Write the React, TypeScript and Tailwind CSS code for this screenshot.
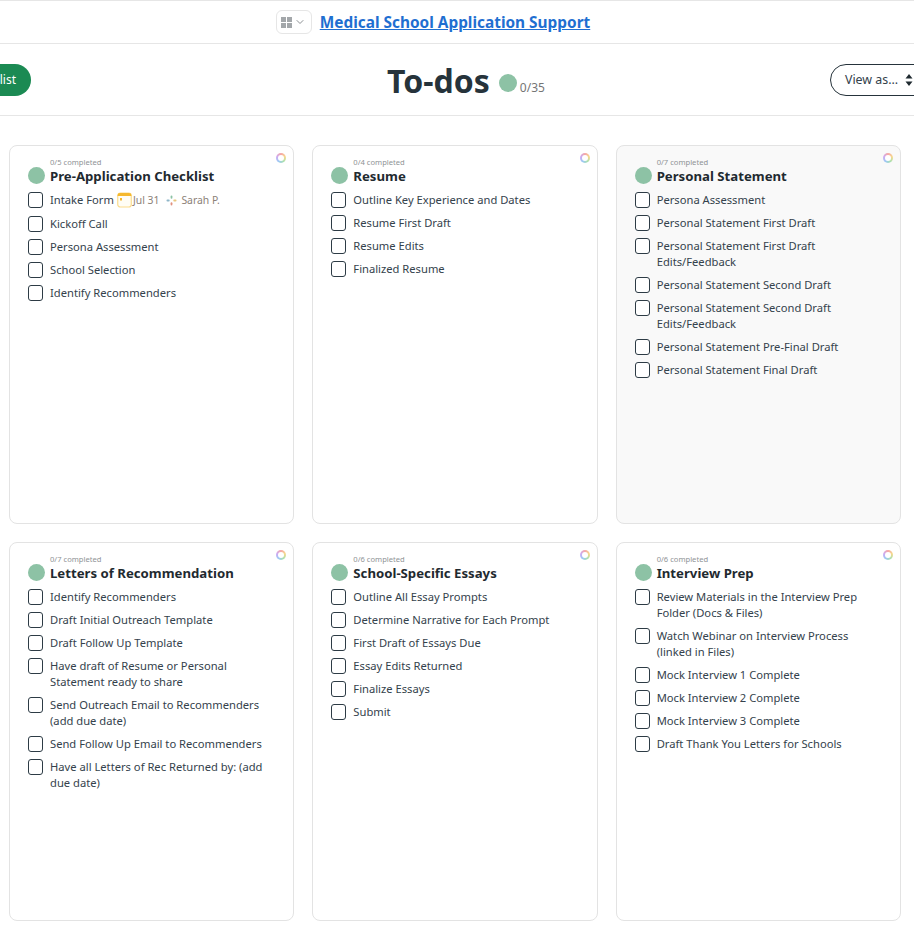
import React from 'react';
import { ChevronDown } from 'lucide-react';

type ListData = { title: string; done: string; items: string[]; shaded?: boolean };

const lists: ListData[] = [
  {
    title: 'Pre-Application Checklist',
    done: '0/5 completed',
    items: ['Intake Form', 'Kickoff Call', 'Persona Assessment', 'School Selection', 'Identify Recommenders'],
  },
  {
    title: 'Resume',
    done: '0/4 completed',
    items: ['Outline Key Experience and Dates', 'Resume First Draft', 'Resume Edits', 'Finalized Resume'],
  },
  {
    title: 'Personal Statement',
    done: '0/7 completed',
    shaded: true,
    items: [
      'Persona Assessment',
      'Personal Statement First Draft',
      'Personal Statement First Draft Edits/Feedback',
      'Personal Statement Second Draft',
      'Personal Statement Second Draft Edits/Feedback',
      'Personal Statement Pre-Final Draft',
      'Personal Statement Final Draft',
    ],
  },
  {
    title: 'Letters of Recommendation',
    done: '0/7 completed',
    items: [
      'Identify Recommenders',
      'Draft Initial Outreach Template',
      'Draft Follow Up Template',
      'Have draft of Resume or Personal Statement ready to share',
      'Send Outreach Email to Recommenders (add due date)',
      'Send Follow Up Email to Recommenders',
      'Have all Letters of Rec Returned by: (add due date)',
    ],
  },
  {
    title: 'School-Specific Essays',
    done: '0/6 completed',
    items: [
      'Outline All Essay Prompts',
      'Determine Narrative for Each Prompt',
      'First Draft of Essays Due',
      'Essay Edits Returned',
      'Finalize Essays',
      'Submit',
    ],
  },
  {
    title: 'Interview Prep',
    done: '0/6 completed',
    items: [
      'Review Materials in the Interview Prep Folder (Docs & Files)',
      'Watch Webinar on Interview Process (linked in Files)',
      'Mock Interview 1 Complete',
      'Mock Interview 2 Complete',
      'Mock Interview 3 Complete',
      'Draft Thank You Letters for Schools',
    ],
  },
];

const CalendarIcon = () => (
  <svg width="15" height="16" viewBox="0 0 15 16" className="shrink-0">
    <rect x="0.75" y="1" width="13.5" height="14" rx="2.5" fill="#fffdf5" stroke="#fbdc8c" strokeWidth="1.2" />
    <path d="M3 1h9a2.4 2.4 0 0 1 2.4 2.4V4H.6v-.6A2.4 2.4 0 0 1 3 1z" fill="#f5b82e" />
    <rect x="3" y="6" width="2" height="2.5" fill="#f5b82e" />
  </svg>
);

const SlackIcon = () => (
  <svg width="11" height="11" viewBox="0 0 11 11" className="shrink-0">
    <rect x="4.6" y="0.5" width="1.8" height="3.2" rx="0.9" fill="#8cc2a4" />
    <rect x="7.3" y="4.6" width="3.2" height="1.8" rx="0.9" fill="#e9c77f" />
    <rect x="4.6" y="7.3" width="1.8" height="3.2" rx="0.9" fill="#e2917f" />
    <rect x="0.5" y="4.6" width="3.2" height="1.8" rx="0.9" fill="#8fb6c9" />
  </svg>
);

const ColorRing = () => (
  <div className="absolute right-[7px] top-[7px] h-[10px] w-[10px] rounded-full bg-[conic-gradient(#f6a6a6,#f7d98c,#a9e0b0,#9cc8f5,#cdaaf2,#f6a6a6)] p-[2px]">
    <div className="h-full w-full rounded-full bg-white" />
  </div>
);

const Row = ({ text }: { text: string }) => (
  <li className={`flex items-start gap-[7px] ${text === 'Intake Form' ? 'min-h-[17px]' : ''}`}>
    <span className="h-[16px] w-[15px] shrink-0 rounded-[3px] border border-[#2d3b45] bg-white" />
    <div className="flex min-w-0 items-start text-[11.2px] leading-[16px] text-[#34424c]">
      <span>{text}</span>
      {text === 'Intake Form' && (
        <span className="ml-[3px] flex h-[16px] items-center whitespace-nowrap text-[10.4px] text-[#8c8177]">
          <CalendarIcon />
          <span className="ml-[1px]">Jul 31</span>
          <span className="ml-[7px] mr-[4px]">
            <SlackIcon />
          </span>
          <span>Sarah P.</span>
        </span>
      )}
    </div>
  </li>
);

const ListCard = ({ title, done, items, shaded }: ListData) => (
  <div
    className={`relative h-[379px] rounded-[8px] border border-[#e3e3e3] pl-[18px] pr-[16px] pt-[12px] ${
      shaded ? 'bg-[#f9f9f9]' : 'bg-white'
    }`}
  >
    <ColorRing />
    <div className="flex items-start gap-[5px]">
      <span className="mt-[9px] h-[17px] w-[17px] shrink-0 rounded-full bg-[#8dc2a5]" />
      <div className="min-w-0">
        <div className="text-[7.6px] leading-[9px] text-[#8f9396]">{done}</div>
        <h3 className="text-[13.2px] font-bold leading-[19px] text-[#1f2a30]">{title}</h3>
      </div>
    </div>
    <ul className="mt-[6px] flex flex-col gap-[7px]">
      {items.map((item) => (
        <Row key={item} text={item} />
      ))}
    </ul>
  </div>
);

export default function App() {
  return (
    <div className="h-[936px] w-[914px] overflow-hidden bg-white font-['Noto_Sans','Open_Sans',sans-serif]">
      <div className="flex h-[44px] items-center justify-center gap-[8px] border-y border-[#e6e6e6] pr-[48px]">
        <button className="flex h-[24px] w-[36px] items-center justify-center gap-[2px] rounded-[6px] border border-[#e6e6e6] bg-white">
          <span className="grid grid-cols-2 gap-[1px]">
            <span className="h-[5px] w-[5px] bg-[#a3a7aa]" />
            <span className="h-[5px] w-[5px] bg-[#a3a7aa]" />
            <span className="h-[5px] w-[5px] bg-[#a3a7aa]" />
            <span className="h-[5px] w-[5px] bg-[#a3a7aa]" />
          </span>
          <ChevronDown size={12} className="text-[#8d9194]" />
        </button>
        <a href="#" className="mt-[2px] text-[15.4px] font-bold leading-[20px] text-[#1f6fd1] underline">
          Medical School Application Support
        </a>
      </div>

      <div className="relative flex h-[72px] items-center justify-between border-b border-[#e6e6e6]">
        <button className="-ml-[60px] h-[32px] w-[91px] rounded-full bg-[#1b8a53] pr-[15px] pt-[1px] text-right text-[12px] text-white">
          list
        </button>
        <div className="ml-[71px] mt-[2px] flex items-center">
          <h1 className="text-[32px] font-bold leading-[40px] text-[#26333b]">To-dos</h1>
          <span className="ml-[9px] mt-[4px] h-[18px] w-[18px] rounded-full bg-[#8dc2a5]" />
          <span className="ml-[3px] mt-[14px] text-[12px] text-[#757575]">0/35</span>
        </div>
        <button className="-mr-[30px] flex h-[32px] w-[114px] items-center rounded-full border border-[#26333b] bg-white pl-[14px] pt-[1px] text-[12.4px] text-[#33414b]">
          View as...
          <svg width="8" height="14" viewBox="0 0 8 14" className="ml-[7px]">
            <path d="M4 1l3.5 4.5h-7zM4 13L.5 8.5h7z" fill="#1f2a30" />
          </svg>
        </button>
      </div>

      <div className="grid w-[901px] grid-cols-3 gap-[18px] pl-[9px] pt-[29px]">
        {lists.map((list) => (
          <ListCard key={list.title} {...list} />
        ))}
      </div>
    </div>
  );
}
